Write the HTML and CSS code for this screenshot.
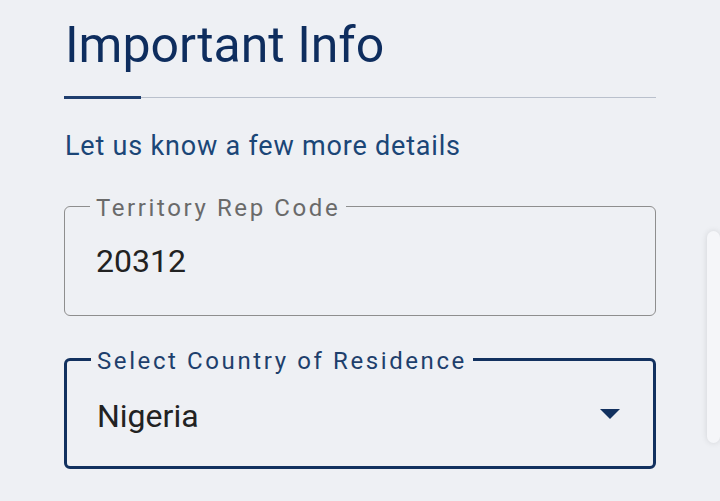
FILE: index.html
```html
<!DOCTYPE html>
<html lang="en">
<head>
<meta charset="utf-8">
<title>Important Info</title>
<link rel="stylesheet" href="styles.css">
</head>
<body>
<div class="page">
  <main class="form">
    <h1 class="title">Important Info</h1>
    <div class="divider"><span class="divider-accent"></span></div>
    <p class="subtitle">Let us know a few more details</p>
    <fieldset class="field">
      <legend class="field-label">Territory Rep Code</legend>
      <div class="field-value">20312</div>
    </fieldset>
    <fieldset class="field field-active">
      <legend class="field-label">Select Country of Residence</legend>
      <div class="field-row">
        <div class="field-value">Nigeria</div>
        <svg class="caret" width="20" height="10" viewBox="0 0 20 10"><path d="M0 0 H20 L10 10 Z" fill="#12315f"/></svg>
      </div>
    </fieldset>
  </main>
  <aside class="side-card"></aside>
</div>
</body>
</html>
```
FILE: styles.css
```css
* { box-sizing: border-box; }
html, body { margin: 0; padding: 0; }
body {
  background: #eef0f4;
  font-family: Roboto, "Noto Sans", "Liberation Sans", sans-serif;
  width: 720px;
  height: 501px;
  overflow: hidden;
}
.page {
  display: flex;
  align-items: flex-start;
  padding-left: 64px;
}
.form {
  width: 592px;
  flex-shrink: 0;
  display: flex;
  flex-direction: column;
}
.title {
  margin: 16px 0 0 0;
  font-size: 50px;
  font-weight: 400;
  line-height: 58px;
  color: #0e2d5e;
  padding-left: 1px;
}
.divider {
  margin-top: 23px;
  height: 1px;
  background: #b9c0cc;
  position: relative;
}
.divider-accent {
  position: absolute;
  left: 0;
  top: -1px;
  width: 77px;
  height: 3px;
  background: #1f3e6e;
}
.subtitle {
  margin: 31px 0 0 0;
  font-size: 27px;
  letter-spacing: 0.8px;
  line-height: 34px;
  color: #1b4677;
  padding-left: 1px;
}
.field {
  margin: 0;
  margin-top: 28px;
  border: 1.5px solid #8e8e8e;
  border-radius: 6px;
  padding: 0 0 0 31px;
  height: 125px;
  min-width: 0;
}
.field-label {
  font-size: 24px;
  letter-spacing: 2.6px;
  color: #6a6a6a;
  padding: 4px 6px 0 6px;
  margin-left: -6px;
  line-height: 26px;
}
.field-value {
  font-size: 32px;
  line-height: 40px;
  color: #222;
  margin-top: 20px;
}
.field-active {
  margin-top: 28px;
  border: 3px solid #12315f;
  height: 125px;
  padding-left: 30px;
}
.field-active .field-value {
  margin-top: 22px;
}
.field-active .field-label {
  color: #1e3f6c;
}
.field-row {
  display: flex;
  align-items: center;
  justify-content: space-between;
  padding-right: 33px;
}
.caret { display: block; margin-top: 18px; }
.side-card {
  margin-left: 51px;
  margin-top: 231px;
  width: 40px;
  height: 212px;
  background: #f5f6f9;
  border-radius: 14px;
  box-shadow: 0 0 6px rgba(0,0,0,0.12);
}
```
